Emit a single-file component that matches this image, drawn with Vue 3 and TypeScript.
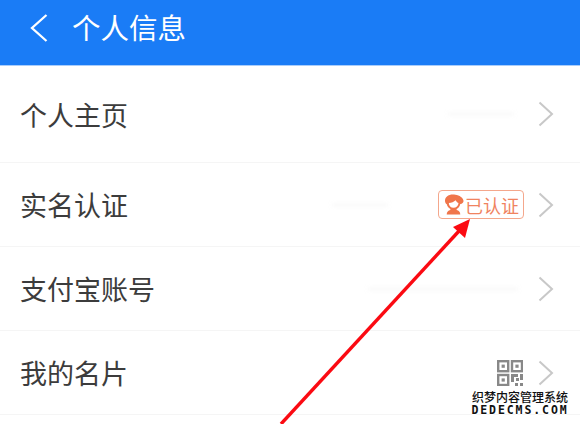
<script setup lang="ts">
interface Row {
  label: string
  badge?: boolean
  qr?: boolean
  smudge?: number
  smudgeGap?: number
}

// smudge = width of the blurred-out value on the right of the row
const rows: Row[] = [
  { label: '个人主页', smudge: 66, smudgeGap: 24 },
  { label: '实名认证', badge: true, smudge: 56, smudgeGap: 50 },
  { label: '支付宝账号', smudge: 150, smudgeGap: 20 },
  { label: '我的名片', qr: true },
]
</script>

<template>
  <div class="page">
    <header class="bar">
      <svg class="back" width="18" height="28" viewBox="0 0 18 28">
        <path d="M16.5 1 L2 14 L16.5 27" fill="none" stroke="#fff" stroke-width="2.3" />
      </svg>
      <span class="title">个人信息</span>
    </header>

    <div v-for="row in rows" :key="row.label" class="row">
      <span class="label">{{ row.label }}</span>
      <span
        v-if="row.smudge"
        class="smudge"
        :style="{ width: row.smudge + 'px', marginRight: row.smudgeGap + 'px' }"
      ></span>
      <span v-if="row.badge" class="badge">
        <svg width="23" height="23" viewBox="0 0 22 22">
          <path d="M3 8.5C2 3.5 7 1 11.5 1.5C15 1.8 19.5 3.5 20.5 7C21 9 19.5 10.5 17.5 10.5C17 13 15.5 14.5 14 15.2V16.2C16 16.8 17.5 18 17.5 20.5H4.5C4.5 18 6 16.8 8 16.2V15.2C6.2 14.3 5 12.8 4.6 10.8C4 10.5 3.3 9.6 3 8.5Z" fill="#f0754a" />
          <path d="M6.5 9.5C9 9.5 11.5 8.5 13 7C13.8 8.5 14.8 9.3 15.8 9.6C15.6 12.3 13.6 14.2 11 14.2C8.5 14.2 6.6 12.3 6.5 9.5Z" fill="#fff" />
        </svg>
        <span>已认证</span>
      </span>
      <svg v-if="row.qr" class="qr" width="26" height="26" viewBox="0 0 26 26">
        <g fill="none" stroke="#888" stroke-width="2.4">
          <rect x="1.2" y="1.2" width="10" height="10" />
          <rect x="15" y="1.2" width="10" height="10" />
          <rect x="1.2" y="15" width="10" height="10" />
        </g>
        <g fill="#888">
          <rect x="4.6" y="4.6" width="3.2" height="3.2" />
          <rect x="18.4" y="4.6" width="3.2" height="3.2" />
          <rect x="4.6" y="18.4" width="3.2" height="3.2" />
          <rect x="14" y="14" width="7" height="3" />
          <rect x="14" y="14" width="3" height="8" />
          <rect x="19" y="18" width="3" height="3" />
          <rect x="23" y="14" width="3" height="6" />
          <rect x="18" y="23" width="3" height="3" />
          <rect x="23" y="23" width="3" height="3" />
        </g>
      </svg>
      <svg class="chevron" width="16" height="26" viewBox="0 0 16 26">
        <path d="M1.5 1.5 L14 13 L1.5 24.5" fill="none" stroke="#c8c8c8" stroke-width="2" />
      </svg>
    </div>

    <svg class="arrow" width="580" height="424" viewBox="0 0 580 424">
      <path d="M281 424 L459 231" stroke="#fb0a12" stroke-width="3.4" fill="none" />
      <path d="M470 219 L453 227 L465 238 Z" fill="#fb0a12" />
    </svg>

    <div class="mark">
      <div class="mark-cn">织梦内容管理系统</div>
      <div class="mark-en">DEDECMS.COM</div>
    </div>
  </div>
</template>

<style scoped>
.page {
  position: relative;
  width: 580px;
  height: 424px;
  overflow: hidden;
  background: #fff;
  font-family: "Noto Sans CJK SC", "Liberation Sans", sans-serif;
}

.bar {
  display: flex;
  align-items: center;
  height: 66px;
  padding: 0 0 10px 30px;
  background: #1a7cf6;
  border-bottom: 1px solid #a9cdfb;
  box-sizing: border-box;
  color: #fff;
}

.back {
  margin-right: 24px;
}

.title {
  font-size: 28.5px;
  line-height: 1;
}

.row {
  display: flex;
  align-items: center;
  height: 84px;
  padding: 0 26px 0 20px;
  border-bottom: 1px solid #f5f5f5;
  box-sizing: border-box;
}

.row:first-of-type {
  height: 97px;
}

.label {
  flex: 1;
  font-size: 27px;
  color: #3c3c3c;
}

.smudge {
  height: 2px;
  background: #f4f4f4;
  filter: blur(2px);
}

.badge {
  display: flex;
  align-items: center;
  width: 86px;
  height: 29px;
  margin-right: 14px;
  padding-left: 3px;
  border: 1.5px solid #f4a78c;
  border-radius: 4px;
  box-sizing: border-box;
  color: #f0835f;
  font-size: 18px;
}

.qr {
  margin-right: 15px;
}

.arrow {
  position: absolute;
  left: 0;
  top: 0;
}

.mark {
  position: absolute;
  right: 11px;
  bottom: 8px;
  width: 98px;
  text-align: center;
  color: #111;
  text-shadow: 1px 0 0 #fff, -1px 0 0 #fff, 0 1px 0 #fff, 0 -1px 0 #fff;
}

.mark-cn {
  font-size: 12px;
  font-weight: 500;
  line-height: 14px;
  white-space: nowrap;
}

.mark-en {
  font-family: "DejaVu Sans Mono", monospace;
  font-size: 11.5px;
  font-weight: 700;
  line-height: 12px;
  letter-spacing: 1.9px;
  white-space: nowrap;
}
</style>
